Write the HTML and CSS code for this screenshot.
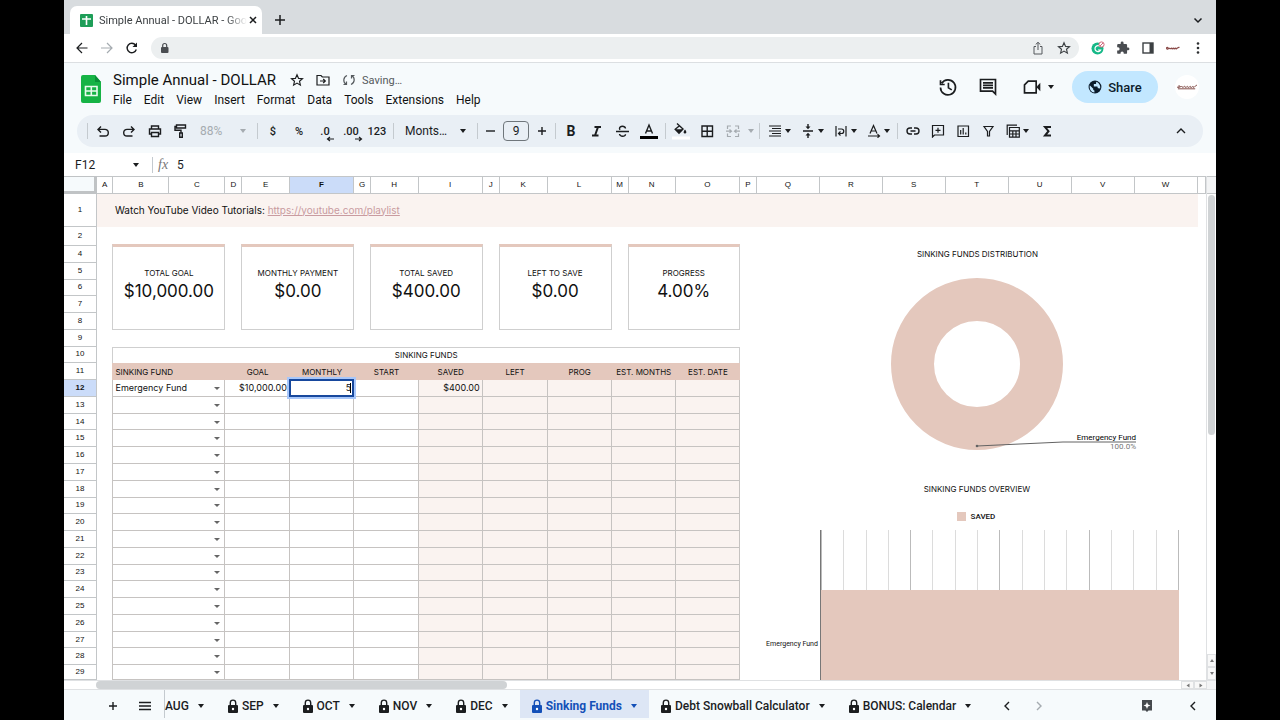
FILE: index.html
```html
<!DOCTYPE html>
<html lang="en">
<head>
<meta charset="utf-8">
<title>Simple Annual - DOLLAR - Google Sheets</title>
<link rel="stylesheet" href="styles.css">
</head>
<body>
<div class="app">
  <div class="tabstrip">
    <div class="browser-tab">
      <svg class="i14" viewBox="0 0 14 14"><rect x="1" y="1" width="13" height="13" rx="1" fill="#1e9e58"/><path d="M7.500 3v9M3 6h9" stroke="#fff" stroke-width="1.600"/></svg>
      <span class="browser-tab-title">Simple Annual - DOLLAR - Goo</span>
      <button class="plain" aria-label="Close tab"><svg class="i12" viewBox="0 0 12 12"><path d="M3 3l6 6M9 3l-6 6" class="s15"/></svg></button>
    </div>
    <button class="plain newtab" aria-label="New tab"><svg class="i12" viewBox="0 0 12 12"><path d="M6 1v10M1 6h10" class="s15"/></svg></button>
    <button class="plain push" aria-label="Search tabs"><svg class="i12" viewBox="0 0 12 12"><path d="M2.500 4.500l3.500 3.500 3.500-3.500" class="s15"/></svg></button>
  </div>

  <div class="addressbar">
    <button class="plain nav" aria-label="Back"><svg class="i14" viewBox="0 0 14 14"><path d="M12.500 7H2.500M7 2L2 7l5 5" class="s12"/></svg></button>
    <button class="plain nav dim" aria-label="Forward"><svg class="i14" viewBox="0 0 14 14"><path d="M1 7h10.500M7 2l5 5-5 5" class="s12"/></svg></button>
    <button class="plain nav" aria-label="Reload"><svg class="i14" viewBox="0 0 14 14"><path d="M11.300 8.500A4.700 4.700 0 1 1 10.500 4" class="s14"/><path d="M12 1.500v4.500H7.500z" fill="currentColor"/></svg></button>
    <div class="omnibox">
      <svg class="i12" viewBox="0 0 12 12"><rect x="2" y="5" width="7.500" height="6" rx="1" fill="#4a4d51"/><path d="M3.700 5V3.500a2 2 0 0 1 4 0V5" stroke="#4a4d51" fill="none" stroke-width="1.200"/></svg>
      <input type="text" aria-label="Address">
      <button class="plain" aria-label="Share page"><svg class="i14" viewBox="0 0 14 14"><path d="M5 5.500H3V13h8V5.500H9M7 9V1.500M4.700 3.500L7 1.300l2.300 2.200" fill="none" stroke="#55585c"/></svg></button>
      <button class="plain" aria-label="Bookmark"><svg class="i14" viewBox="0 0 24 24"><path d="M12 3l2.700 6.200 6.700.6-5.100 4.400 1.500 6.600L12 17.300l-5.800 3.500 1.500-6.600L2.600 9.800l6.700-.6z" fill="none" stroke="#3c4043" stroke-width="2"/></svg></button>
    </div>
    <button class="plain ext" aria-label="Grammar extension"><svg class="i14" viewBox="0 0 14 14"><circle cx="6.500" cy="7.500" r="6" fill="#15b887"/><path d="M9.500 6a3 3 0 1 0 .2 3H7" fill="none" stroke="#fff" stroke-width="1.200"/><circle cx="10.500" cy="3.500" r="2.600" fill="#fff" stroke="#d0677a"/><path d="M9 5l3-3" stroke="#d0677a"/></svg></button>
    <button class="plain ext" aria-label="Extensions"><svg class="i14" viewBox="0 0 24 24"><path d="M20.500 11H19V7a2 2 0 0 0-2-2h-4V3.500a2.500 2.500 0 0 0-5 0V5H4a2 2 0 0 0-2 2v3.800h1.500a2.700 2.700 0 0 1 0 5.400H2V20a2 2 0 0 0 2 2h3.800v-1.500a2.700 2.700 0 0 1 5.400 0V22H17a2 2 0 0 0 2-2v-4h1.500a2.500 2.500 0 0 0 0-5z" fill="#4a4d51"/></svg></button>
    <button class="plain ext" aria-label="Side panel"><svg class="i14" viewBox="0 0 14 14"><rect x="2" y="2" width="10" height="10" fill="none" stroke="#3c4043" stroke-width="1.400"/><path d="M8.500 2H12v10H8.500z" fill="#3c4043"/></svg></button>
    <button class="plain ext" aria-label="Profile"><svg class="i14" viewBox="0 0 14 14"><path d="M0 8c1-3 3-1 1.500 0S4 6.500 4 7.500 6 6 6 7.500 8 6 8 7.500s2-1.500 2 0 2-2 3.500-1" fill="none" stroke="#8a4a48" stroke-width="1.200"/></svg></button>
    <button class="plain ext" aria-label="Browser menu"><svg class="i14" viewBox="0 0 14 14"><g fill="#2b2e31"><circle cx="7" cy="2.500" r="1.300"/><circle cx="7" cy="7" r="1.300"/><circle cx="7" cy="11.500" r="1.300"/></g></svg></button>
  </div>

  <header class="dochead">
    <svg class="sheets-logo" viewBox="0 0 20 28"><path d="M2 0h12l6 7v19a2 2 0 0 1-2 2H2a2 2 0 0 1-2-2V2a2 2 0 0 1 2-2z" fill="#16b345"/><path d="M14 0l6 7h-6z" fill="#0a8f38"/><path d="M4.500 11.500h11.500v9H4.500zM4.500 16H16M10.300 11.500v9" fill="none" stroke="#e9fbee" stroke-width="1.600"/></svg>
    <div class="docinfo">
      <div class="titlerow">
        <h1>Simple Annual - DOLLAR</h1>
        <button class="plain" aria-label="Star"><svg class="i14" viewBox="0 0 24 24"><path d="M12 3l2.700 6.200 6.700.6-5.100 4.400 1.500 6.600L12 17.300l-5.800 3.500 1.500-6.600L2.600 9.800l6.700-.6z" class="s2"/></svg></button>
        <button class="plain" aria-label="Move"><svg class="i14" viewBox="0 0 14 14"><path d="M1 2.500h4l1.300 1.500H13v8H1zM4 8h5M7.200 6L9.300 8l-2.100 2" class="s12"/></svg></button>
        <span class="status"><svg class="i14" viewBox="0 0 14 14"><path d="M5 2.500A5 5 0 0 0 4 11.300M9 11.500A5 5 0 0 0 10 2.700M4.500 8.500v3h-3M9.500 5.500v-3h3" class="s12"/></svg>Saving…</span>
      </div>
      <nav class="menus">
        <button class="plain">File</button><button class="plain">Edit</button><button class="plain">View</button><button class="plain">Insert</button><button class="plain">Format</button><button class="plain">Data</button><button class="plain">Tools</button><button class="plain">Extensions</button><button class="plain">Help</button>
      </nav>
    </div>
    <div class="headactions">
      <button class="plain" aria-label="Version history"><svg class="i20" viewBox="0 0 24 24"><path d="M4.500 7.500A9 9 0 1 1 3 12.500M3 4v5h5M12.500 7v6l4 2.500" class="s2"/></svg></button>
      <button class="plain" aria-label="Comments"><svg class="i20" viewBox="0 0 24 24"><path d="M3 3h18v17.500L17.500 17H3zM6 7h12M6 10h12M6 13h12" class="s2"/></svg></button>
      <button class="plain meet" aria-label="Meet"><svg class="i20" viewBox="0 0 24 24"><path d="M7.500 5H17v14H3V9.500z" class="s2"/><path d="M18 11l4-4v10l-4-4z" fill="currentColor"/></svg><i class="caret"></i></button>
      <button class="share"><svg class="i14" viewBox="0 0 24 24"><circle cx="12" cy="12" r="11" fill="#0b1b2b"/><path d="M3 9l6 6v2l2 1v3.500C6 21 2 17 3 9zM14 3v2c0 2-1 2-4 2v4h6l1 3h3l.5 2C22 11 20 5 14 3z" fill="#c2e7ff"/></svg>Share</button>
      <button class="avatar" aria-label="Account"><svg viewBox="0 0 22 10"><path d="M0 6c2-4 5-2 2-.5S6 3 6 5s3-2.500 3 0 3-2.500 3 0 3-2.500 3 0 3-2.500 3 0 2-2 4-2M1 7h19" fill="none" stroke="#85504c" stroke-width="1.100"/></svg></button>
    </div>
  </header>

  <div class="toolbar-wrap">
  <div class="toolbar" role="toolbar" aria-label="Main toolbar">
    <i class="sep"></i>
    <button class="tb" aria-label="Undo"><svg class="i14" viewBox="0 0 14 14"><path d="M3.500 12H9a3.300 3.300 0 0 0 0-6.600H2.500M5 2.500L2 5.400l3 3" class="s14"/></svg></button>
    <button class="tb" aria-label="Redo"><svg class="i14" viewBox="0 0 14 14"><path d="M10.500 12H5a3.300 3.300 0 0 1 0-6.600h6.500M9 2.500l3 2.900-3 3" class="s14"/></svg></button>
    <button class="tb" aria-label="Print"><svg class="i14" viewBox="0 0 14 14"><path d="M3.500 10H1.500V5h11v5h-2M3.500 5V2h7v3M3.500 8.500h7V12.500h-7z" class="s14"/></svg></button>
    <button class="tb" aria-label="Paint format"><svg class="i14" viewBox="0 0 14 14"><path d="M2.500 1h9v3h-9zM2.500 2.500H1v3.700h6V9M5.700 9h2.600v4.200H5.700z" class="s14"/></svg></button>
    <span class="pickwrap zoom"><select aria-label="Zoom"><option>88%</option></select></span>
    <i class="sep"></i>
    <button class="tb">$</button><button class="tb">%</button>
    <button class="tb" aria-label="Decrease decimals"><span class="dec">.0<svg viewBox="0 0 8 6"><path d="M8 3H2M4 1L1.500 3 4 5" class="s12"/></svg></span></button>
    <button class="tb" aria-label="Increase decimals"><span class="dec">.00<svg viewBox="0 0 8 6"><path d="M0 3h6M4 1l2.500 2L4 5" class="s12"/></svg></span></button>
    <button class="tb">123</button>
    <i class="sep"></i>
    <span class="pickwrap font"><select aria-label="Font"><option>Monts…</option></select></span>
    <i class="sep"></i>
    <button class="tb small" aria-label="Decrease font size"><svg class="i12" viewBox="0 0 12 12"><path d="M2 6h9" class="s14"/></svg></button>
    <input class="size" type="text" value="9" aria-label="Font size">
    <button class="tb small" aria-label="Increase font size"><svg class="i12" viewBox="0 0 12 12"><path d="M6 2v8M2 6h8" class="s14"/></svg></button>
    <i class="sep"></i>
    <button class="tb bold">B</button>
    <button class="tb" aria-label="Italic"><svg class="i14" viewBox="0 0 14 14"><path d="M4.500 3h6.500M2 11.500h6.500M8 3l-3 8.500" class="s2"/></svg></button>
    <button class="tb" aria-label="Strikethrough"><svg class="i14" viewBox="0 0 14 14"><path d="M0 7.500h13M9.500 4.500C9 1.500 3.500 1.500 3.500 4.500c0 .6.300 1 .7 1.300M3.500 10c.5 3 6 3 6 .2" class="s14"/></svg></button>
    <button class="tb" aria-label="Text color"><svg class="i18" viewBox="0 0 18 18"><path d="M5.500 11.500L9 3l3.500 8.500M6.500 9h5" class="s14"/><path d="M0 14h18v3H0z"/></svg></button>
    <i class="sep"></i>
    <button class="tb" aria-label="Fill color"><svg class="i18" viewBox="0 0 18 18"><path d="M5 1.500l6 5.500-4 4.200L3.200 7.300 7.500 3.700" class="s14"/><path d="M3.500 7.200h7L7 11zM13 7.500c2.500 3 1 4 0 4s-2.500-1 0-4z" fill="currentColor"/><path d="M0 14.500h18v3H0z" fill="#fff"/></svg></button>
    <button class="tb" aria-label="Borders"><svg class="i14" viewBox="0 0 14 14"><path d="M2 2h10.500v10.500H2zM7.200 2v10.500M2 7.200h10.500" class="s14"/></svg></button>
    <button class="tb dim" aria-label="Merge cells"><svg class="i14" viewBox="0 0 14 14"><path d="M5 2H1.500v3M9 2h3.500v3M5 12.500H1.500v-3M9 12.500h3.500v-3M0 7.200h5M3.500 5.500l2 1.700-2 1.700M14 7.200H9M10.500 5.500l-2 1.700 2 1.700" class="s12"/></svg></button>
    <button class="drop dim" aria-label="Merge options"><i class="caret"></i></button>
    <i class="sep"></i>
    <button class="combo" aria-label="Horizontal align"><svg class="i14" viewBox="0 0 14 14"><path d="M1 2h12M4 4.500h9M1 7h12M4 9.500h9M1 12h12" class="s12"/></svg><i class="caret"></i></button>
    <button class="combo" aria-label="Vertical align"><svg class="i14" viewBox="0 0 14 14"><path d="M2 7h10M7 0v3.500M7 14v-3.500" class="s14"/><path d="M4.500 2.500h5L7 5.200zM4.500 11.500h5L7 8.800z" fill="currentColor"/></svg><i class="caret"></i></button>
    <button class="combo" aria-label="Text wrapping"><svg class="i14" viewBox="0 0 14 14"><path d="M2 2v10.500M12 2v10.500M4 5h3.500a2 2 0 0 1 0 4.500H5M6.500 7.500l-2 2 2 2" class="s12"/></svg><i class="caret"></i></button>
    <button class="combo" aria-label="Text rotation"><svg class="i14" viewBox="0 0 14 14"><path d="M3 9.500L6.500 1.500 10 9.500M4.500 7h4M1 12h11M10.500 10.300l2 1.700-2 1.700" class="s12"/></svg><i class="caret"></i></button>
    <i class="sep"></i>
    <button class="tb mid" aria-label="Insert link"><svg class="i14" viewBox="0 0 14 14"><path d="M6 4H4a3 3 0 0 0 0 6h2M8 4h2a3 3 0 0 1 0 6H8M4.500 7h5" class="s14"/></svg></button>
    <button class="tb mid" aria-label="Insert comment"><svg class="i14" viewBox="0 0 14 14"><path d="M1.500 1.500h11V11h-9l-2 2zM7 3.800v5M4.500 6.300h5" class="s12"/></svg></button>
    <button class="tb mid" aria-label="Insert chart"><svg class="i14" viewBox="0 0 14 14"><path d="M2 2h10.500v10.500H2zM4.700 6v4.500M7.200 4v6.500M9.800 8.500v2" class="s12"/></svg></button>
    <button class="tb mid" aria-label="Create filter"><svg class="i14" viewBox="0 0 14 14"><path d="M3 2.500h9L8.500 7.500V12H6.500V7.500z" class="s12"/></svg></button>
    <button class="combo" aria-label="Table views"><svg class="i14" viewBox="0 0 14 14"><path d="M1.200 11V1.200H11M3.500 3.500h9.800v9.700H3.500zM3.500 6.800h9.800M3.500 10h9.800M6.800 6.800v6.400M10 6.800v6.400" class="s12"/></svg><i class="caret"></i></button>
    <button class="tb" aria-label="Functions"><svg class="i14" viewBox="0 0 14 14"><path d="M12 3H6l3.500 4.200L6 11.500h6" class="s2"/></svg></button>
    <button class="tb push" aria-label="Hide menus"><svg class="i12" viewBox="0 0 12 12"><path d="M2 8l4-4 4 4" class="s14"/></svg></button>
  </div>
  </div>

  <div class="formulabar">
    <span class="pickwrap namebox"><select aria-label="Name box"><option>F12</option></select></span>
    <i class="sep"></i>
    <label class="fx" for="formula">fx</label>
    <input id="formula" type="text" value="5">
  </div>

  <main class="sheetarea">
    <table class="sheet">
      <thead><tr id="letters"></tr></thead>
      <tbody id="rows">
        <tr><th>1</th><td class="banner">Watch YouTube Video Tutorials: <a href="#playlist">https://youtube.com/playlist</a></td><td></td></tr>
        <tr><th class="hidden-below">2</th><td class="all"></td></tr>
        <tr>
          <th>4</th><td class="five"></td>
          <td class="card two"><span>TOTAL GOAL</span><strong>$10,000.00</strong></td><td class="five"></td>
          <td class="card two"><span>MONTHLY PAYMENT</span><strong>$0.00</strong></td><td class="five"></td>
          <td class="card two"><span>TOTAL SAVED</span><strong>$400.00</strong></td><td class="five"></td>
          <td class="card two"><span>LEFT TO SAVE</span><strong>$0.00</strong></td><td class="five"></td>
          <td class="card two"><span>PROGRESS</span><strong>4.00%</strong></td>
          <td class="charts">
            <figure class="pie">
              <figcaption>SINKING FUNDS DISTRIBUTION</figcaption>
              <svg viewBox="0 0 320 190" width="320" height="190">
                <circle cx="160" cy="102" r="64.500" fill="none" stroke="#e4c8bd" stroke-width="43"/>
                <path d="M160 184l86-4h73" fill="none" stroke="#636363"/><circle cx="160" cy="184" r="1.300" fill="#636363"/>
                <text x="319" y="178" class="lab">Emergency Fund</text><text x="319" y="187" class="lab soft">100.0%</text>
              </svg>
            </figure>
            <figure class="bars">
              <figcaption>SINKING FUNDS OVERVIEW</figcaption>
              <div class="legend"><i></i>SAVED</div>
              <div class="barbody">
                <span class="axislabel">Emergency Fund</span>
                <div class="plot">
                  <div class="ticks"><i></i><i></i><i></i><i></i><i></i><i></i><i></i><i></i><i></i><i></i><i></i><i></i><i></i><i></i><i></i><i></i><i></i></div>
                  <div class="bar"></div>
                </div>
              </div>
            </figure>
          </td>
        </tr>
        <tr><th>5</th></tr><tr><th>6</th></tr><tr><th>7</th></tr><tr><th>8</th></tr>
        <tr><th>9</th></tr>
        <tr><th>10</th><td></td><td class="caption">SINKING FUNDS</td></tr>
        <tr class="heads"><th>11</th><td></td><th class="two left">SINKING FUND</th><th class="two">GOAL</th><th>MONTHLY</th><th class="two">START</th><th>SAVED</th><th class="two">LEFT</th><th>PROG</th><th class="two">EST. MONTHS</th><th>EST. DATE</th></tr>
        <tr class="entry"><th class="current">12</th><td></td><td class="two pick"><select aria-label="Fund 12"><option>Emergency Fund</option></select></td><td class="two">$10,000.00</td><td class="editing"><input type="text" value="5" aria-label="F12"></td><td class="two"></td><td class="calc">$400.00</td><td class="two calc"></td><td class="calc"></td><td class="two calc"></td><td class="calc"></td></tr>
      </tbody>
    </table>
    <div class="vscroll"><span class="corner"></span><span class="thumb"></span><button class="step" aria-label="Scroll up"><i class="caret up"></i></button><button class="step" aria-label="Scroll down"><i class="caret"></i></button></div>
  </main>
  <div class="hscroll"><span class="thumb"></span><button class="step" aria-label="Scroll left"><i class="caret west"></i></button><button class="step" aria-label="Scroll right"><i class="caret east"></i></button><span class="corner"></span></div>

  <svg class="defs"><symbol id="lock" viewBox="0 0 10 14"><path d="M1 6h8a1 1 0 0 1 1 1v6a1 1 0 0 1-1 1H1a1 1 0 0 1-1-1V7a1 1 0 0 1 1-1z" fill="currentColor"/><path d="M2.300 6V3.800a2.700 2.700 0 0 1 5.400 0V6" fill="none" stroke="currentColor" stroke-width="1.400"/><circle cx="5" cy="10" r="1.200" fill="#fff"/></symbol></svg>
  <footer class="sheettabs">
    <button class="plain add" aria-label="Add sheet"><svg class="i12" viewBox="0 0 12 12"><path d="M6 2v8M2 6h8" class="s14"/></svg></button>
    <button class="plain list" aria-label="All sheets"><svg class="i12" viewBox="0 0 12 12"><path d="M0 2.500h12M0 6h12M0 9.500h12" class="s14"/></svg></button>
    <button class="tab first">AUG<i class="caret"></i></button>
    <button class="tab"><svg><use href="#lock"/></svg>SEP<i class="caret"></i></button>
    <button class="tab"><svg><use href="#lock"/></svg>OCT<i class="caret"></i></button>
    <button class="tab"><svg><use href="#lock"/></svg>NOV<i class="caret"></i></button>
    <button class="tab"><svg><use href="#lock"/></svg>DEC<i class="caret"></i></button>
    <button class="tab active"><svg><use href="#lock"/></svg>Sinking Funds<i class="caret"></i></button>
    <button class="tab"><svg><use href="#lock"/></svg>Debt Snowball Calculator<i class="caret"></i></button>
    <button class="tab"><svg><use href="#lock"/></svg>BONUS: Calendar<i class="caret"></i></button>
    <button class="plain page" aria-label="Previous tabs"><svg class="i12" viewBox="0 0 12 12"><path d="M8 2L4 6l4 4" class="s14"/></svg></button>
    <button class="plain page dim" aria-label="Next tabs"><svg class="i12" viewBox="0 0 12 12"><path d="M4 2l4 4-4 4" class="s14"/></svg></button>
    <button class="plain push explore" aria-label="Explore"><svg class="i12" viewBox="0 0 12 12"><path d="M1 0h10v10.500H7.500L6 12l-1.500-1.500H1z" fill="#45494d"/><path d="M6 2l1 2.400 2.500 1L7 6.400 6 9 5 6.400l-2.500-1L5 4.400z" fill="#fff"/></svg></button>
    <button class="plain side" aria-label="Show side panel"><svg class="i12" viewBox="0 0 12 12"><path d="M8 2L4 6l4 4" class="s14"/></svg></button>
  </footer>
</div>
<script src="sheet.js"></script>
</body>
</html>
```

FILE: sheet.js
```js
const letters = document.getElementById("letters");
letters.innerHTML = '<td class="selectall"></td>' +
  [..."ABCDEFGHIJKLMNOPQRSTUVW"].map(c => `<th class="${c === "F" ? "current" : ""}">${c}</th>`).join("") + "<th></th>";

const rows = document.getElementById("rows");
for (let n = 13; n <= 29; n++) {
  const tr = document.createElement("tr");
  tr.className = "entry";
  tr.innerHTML = `<th>${n}</th><td></td>
    <td class="two pick"><select aria-label="Fund ${n}"><option></option></select></td>
    <td class="two"></td><td></td><td class="two"></td><td class="calc"></td>
    <td class="two calc"></td><td class="calc"></td><td class="two calc"></td><td class="calc"></td>`;
  rows.appendChild(tr);
}
```

FILE: styles.css
```css
* { box-sizing: border-box; }
body { margin: 0; background: #000; font-family: Roboto, "Liberation Sans", sans-serif; font-size: 12px; color: #1b1d1f; }
button, input, select { font: inherit; color: inherit; background: none; border: 0; padding: 0; margin: 0; border-radius: 0; outline: 0; appearance: none; }
button { display: flex; align-items: center; justify-content: center; flex: none; }
svg { display: block; flex: none; }
.app { height: 100vh; margin: 0 5%; display: flex; flex-direction: column; background: #fff; overflow: hidden; }

.i12 { width: 12px; height: 12px; }
.i14 { width: 14px; height: 14px; }
.i18 { width: 18px; height: 18px; }
.i20 { width: 20px; height: 20px; }
.s12, .s14, .s15, .s2 { fill: none; stroke: currentColor; }
.s12 { stroke-width: 1.2; }
.s14 { stroke-width: 1.4; }
.s15 { stroke-width: 1.5; }
.s2 { stroke-width: 2; }
.dim { color: #a5abb0; }
.push { margin-left: auto; }
.defs { position: absolute; width: 0; height: 0; }
.caret { flex: none; width: 0; height: 0; border: 3px solid transparent; border-top: 4px solid currentColor; border-bottom: 0; }
.sep { flex: none; width: 6px; display: flex; justify-content: center; }
.sep::before { content: ""; width: 1px; height: 16px; background: #c4cacf; }

/* browser chrome */
.tabstrip { display: flex; align-items: flex-end; height: 34px; padding: 0 12px 0 6px; background: #d8dcdf; }
.browser-tab { display: flex; align-items: center; width: 192px; height: 28px; padding: 0 6px 0 9px; background: #fff; border-radius: 7px 7px 0 0; }
.browser-tab-title { flex: none; margin: 0 auto 0 6px; white-space: nowrap; font-size: 11px; color: #3c4043; mask-image: linear-gradient(90deg, #000 86%, transparent); }
.tabstrip > .plain { height: 28px; }
.newtab { margin-left: 12px; }
.addressbar { display: flex; align-items: center; height: 29px; padding: 0 6px 0 5px; border-bottom: 1px solid #dcdfe2; flex: none; }
.nav { width: 25px; }
.omnibox { flex: 1; display: flex; align-items: center; gap: 12px; height: 22px; margin: 0 6px 0 7px; padding: 0 8px; border-radius: 11px; background: #eceff0; }
.omnibox input { flex: 1; min-width: 0; }
.ext { width: 25px; }

/* document header */
.dochead { display: flex; align-items: center; height: 52px; padding: 0 17px; background: #f6fafc; flex: none; }
.sheets-logo { width: 20px; height: 28px; }
.docinfo { margin-left: 12px; padding-top: 2px; }
.titlerow { display: flex; align-items: center; gap: 12px; height: 20px; }
h1 { margin: 0 2px 0 0; font-size: 15px; font-weight: 400; color: #111; }
.status { display: flex; align-items: center; gap: 6px; font-size: 11px; color: #55595d; }
.menus { display: flex; gap: 12px; height: 20px; color: #111; }
.headactions { margin-left: auto; padding-bottom: 4px; display: flex; align-items: center; gap: 20px; }
.meet { gap: 6px; margin-left: 4px; }
.share { gap: 6px; width: 86px; height: 32px; margin-left: -2px; border-radius: 16px; background: #c2e7ff; font-weight: 500; font-size: 13px; color: #0b1b2b; }
.avatar { width: 24px; height: 24px; margin-left: -3px; border-radius: 50%; background: #fff; }
.avatar svg { width: 20px; height: 10px; }

.toolbar-wrap { padding: 0 13px 6px; background: #f6fafc; flex: none; }
.toolbar { display: flex; align-items: center; height: 32px; padding: 0 9px 0 7px; border-radius: 16px; background: #e9eff5; }
.tb { width: 26px; height: 26px; font-weight: 500; font-size: 11px; }
.mid { width: 25px; }
.small { width: 20px; }
.bold { font-size: 14px; font-weight: 700; }
.drop { width: 10px; }
.combo { width: 33px; gap: 3px; padding-left: 1px; }
.dec { position: relative; }
.dec svg { position: absolute; right: -4px; bottom: -4px; width: 8px; height: 6px; }
.size { width: 26px; height: 20px; margin: 0 3px; border: 1px solid #6f767b; border-radius: 4px; text-align: center; }
.pickwrap { position: relative; display: flex; align-items: center; }
.pickwrap select { width: 100%; }
.pickwrap::after { content: ""; position: absolute; right: 8px; top: 50%; margin-top: -2px; border: 3px solid transparent; border-top: 4px solid currentColor; border-bottom: 0; pointer-events: none; }
.zoom { width: 60px; padding-left: 6px; color: #a5abb0; }
.font { width: 78px; padding-left: 9px; }
.namebox { width: 82px; padding-left: 11px; }
.namebox::after { right: 7px; }

.formulabar { display: flex; align-items: center; height: 23px; flex: none; }
.formulabar .sep { width: 12px; }
.fx { width: 19px; font-family: "Liberation Serif", serif; font-style: italic; font-size: 14px; color: #777; }
.formulabar input { flex: 1; }

/* spreadsheet */
.sheetarea { flex: 1; min-height: 0; display: flex; }
.sheet { flex: 1; min-width: 0; height: 100%; display: grid; overflow: hidden;
  grid-template-columns: 33px 33fr 112fr 112fr 34fr 95fr 129fr 33fr 96fr 128fr 34fr 96fr 128fr 34fr 95fr 128fr 34fr repeat(7, 126fr) 17fr;
  grid-template-rows: 18px 33px 19px repeat(25, minmax(0, 17fr)) minmax(0, 15fr);
  font-family: Inter, "Liberation Sans", sans-serif; font-size: 9px; line-height: 12px; color: #111; }
.sheet thead, .sheet tbody, .sheet tr { display: contents; }
.sheet th, .sheet td { display: flex; align-items: center; justify-content: center; min-width: 0; min-height: 0; padding: 0; white-space: nowrap; font-weight: 400; }
.sheet thead th, .sheet tbody th:first-child { font-family: "Liberation Sans", sans-serif; font-size: 8px; border: solid #c3c6c8; border-width: 0 1px 1px 0; }
.sheet thead th { border-top-width: 1px; }
.sheet tbody th:first-child { grid-column: 1; }
.sheet .selectall { border: solid #c0c3c5; border-width: 1px 3px 3px 0; background: #f6fafc; }
.sheet .hidden-below { border-bottom: 3px double #c3c6c8; }
.sheet .current { background: #cbdcf9; font-weight: 700; }
.sheet .two { grid-column: span 2; }
.sheet .five { grid-row: span 5; }
.sheet .all { grid-column: span 24; }
.sheet .banner { grid-column: span 23; justify-content: flex-start; padding: 0 0 2px 18px; background: #faf3f0; font-size: 10px; white-space: pre; }
.banner a { color: #c99ba0; }
.sheet .card { grid-row: span 5; flex-direction: column; border: 1px solid #cfcfcf; border-top: 3px solid #e4c8bd; margin: -2px 0 0 -1px; padding-bottom: 8px; }
.card span { font-size: 8px; line-height: 14px; }
.card strong { font-size: 17px; line-height: 22px; font-weight: 400; }
.sheet .caption { grid-column: span 14; border: 1px solid #cfcfcf; border-width: 1px 1px 0 1px; margin-left: -1px; font-size: 8px; }
.sheet .heads th:not(:first-child) { background: #e4c8bd; font-size: 8px; }
.sheet .heads .left { justify-content: flex-start; padding-left: 3px; margin-left: -1px; }
.sheet .entry td { justify-content: flex-end; padding-right: 2px; border: solid #c6c3c1; border-width: 0 1px 1px 0; }
.sheet .entry td:nth-child(2) { border-bottom: 0; }
.sheet .entry .calc { background: #faf3f0; }
.sheet .pick { position: relative; }
.pick select { width: 100%; padding-left: 2px; }
.pick::after { content: ""; position: absolute; right: 4px; top: 50%; margin-top: -1px; border: 3px solid transparent; border-top: 3px solid #666; border-bottom: 0; pointer-events: none; }
.sheet .entry .editing { position: relative; margin: -1px 0 0 -1px; padding: 0 1px 0 0; border: 2px solid #17489d; box-shadow: 0 0 0 2px #a8c7fa; background: #fff; }
.editing input { width: 100%; text-align: right; }
.editing::after { content: ""; position: absolute; right: 1px; top: 2px; bottom: 2px; width: 1px; background: #000; }

/* charts */
.sheet .charts { grid-column: span 9; grid-row: span 26; flex-direction: column; justify-content: flex-start; align-items: stretch; }
figure { margin: 0; }
figcaption { font-size: 8px; line-height: 16px; text-align: center; }
.pie { display: flex; flex-direction: column; align-items: center; padding-left: 9px; flex: none; }
.lab { font-size: 8px; text-anchor: end; fill: #000; }
.soft { fill: #777; }
.bars { flex: 1; display: flex; flex-direction: column; padding-top: 29px; min-height: 0; }
.bars figcaption { padding-left: 8px; }
.legend { display: flex; justify-content: center; align-items: center; gap: 5px; height: 27px; margin-top: 6px; padding-left: 6px; font-family: Roboto, sans-serif; font-size: 8px; font-weight: 500; }
.legend i { width: 9px; height: 9px; background: #e4c8bd; }
.barbody { flex: 1; display: flex; min-height: 0; padding-right: 27px; }
.axislabel { width: 80px; padding: 108px 2px 0 0; text-align: right; font-family: Roboto, sans-serif; font-size: 7px; }
svg .lab { font-family: Roboto, sans-serif; }
.plot { flex: 1; display: flex; flex-direction: column; border-left: 1px solid #777; }
.ticks { height: 60px; display: flex; justify-content: space-between; }
.ticks i { width: 1px; background: #dcdcdc; }
.ticks i:nth-child(4n+1) { background: #bbb; }
.bar { flex: 1; background: #e4c8bd; }

.vscroll { width: 10px; flex: none; display: flex; flex-direction: column; border-left: 1px solid #dfe1e3; }
.vscroll .corner { height: 18px; background: #f3f4f5; border: solid #c3c6c8; border-width: 1px 0; }
.thumb { background: #d0d3d5; border-radius: 4px; }
.vscroll .thumb { width: 7px; margin: 1px 1px auto; flex: 0 1 240px; }
.step { color: #777; background: #f8f8f8; border: 1px solid #dfe1e3; }
.step .caret { border-width: 3px 2px 0; }
.step .up { transform: rotate(180deg); }
.step .east { transform: rotate(-90deg); }
.step .west { transform: rotate(90deg); }
.vscroll .step { height: 13px; }
.hscroll { display: flex; align-items: stretch; height: 10px; flex: none; padding-left: 32px; border: solid #dfe1e3; border-width: 1px 0; }
.hscroll .thumb { flex: 0 1 411px; margin-right: auto; border-radius: 4px; }
.hscroll .step { width: 13px; }
.hscroll .corner { width: 9px; background: #f3f4f5; }

.sheettabs { display: flex; height: 30px; padding-left: 34px; background: #f6fafc; flex: none; overflow: hidden; }
.add { width: 30px; }
.list { width: 34px; }
.tab { height: 28px; padding: 4px 12px 0; font-weight: 500; }
.sheettabs .plain { height: 32px; }
.tab svg { width: 10px; height: 14px; margin-right: 4px; }
.tab .caret { margin-left: 9px; }
.tab.first { padding-left: 1px; margin-left: 2px; box-shadow: inset 1px 0 #c4cacf; }
.tab.active { color: #1450b8; background: #dde6f5; font-weight: 700; }
.page { width: 32px; }
.tab + .page { margin-left: 8px; }
.explore { width: 32px; }
.side { width: 46px; margin-left: 7px; }
```
